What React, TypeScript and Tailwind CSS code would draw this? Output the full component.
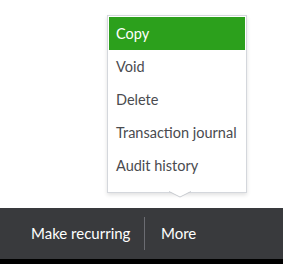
const items = ["Copy", "Void", "Delete", "Transaction journal", "Audit history"];

export default function App() {
  return (
    <div className="flex h-[264px] w-[283px] flex-col bg-white font-['Lato',sans-serif]">
      <div className="relative h-[208px] shrink-0">
        <div className="absolute left-[107px] top-[15px] w-[140px] border border-[#d4d7dc] bg-white px-px pt-px pb-[10px] shadow-[0_2px_4px_rgba(0,0,0,0.12)]">
          <ul>
            {items.map((label, i) => (
              <li
                key={label}
                className={
                  i === 0
                    ? "flex h-[33px] items-center bg-[#2ca01c] pl-[7px] text-[14.5px] text-white"
                    : "flex h-[33px] items-center pl-[7px] text-[14.5px] text-[#4a4b4f]"
                }
              >
                {label}
              </li>
            ))}
          </ul>
          <svg className="absolute left-[61px] top-full -mt-px" width="22" height="7" viewBox="0 0 22 7">
            <polygon points="0,0 22,0 11,6" fill="white" />
            <polyline points="0,0.5 11,6 22,0.5" fill="none" stroke="#c9ccd1" strokeWidth="1" />
          </svg>
        </div>
      </div>
      <div className="flex h-[51px] shrink-0 items-center bg-[#393a3d] text-[15px] text-white">
        <button className="w-[144px] pl-[31px] text-left">Make recurring</button>
        <div className="h-[33px] w-px bg-[#6b6c72]" />
        <button className="pl-[16px]">More</button>
      </div>
      <div className="flex-1 bg-black" />
    </div>
  );
}
